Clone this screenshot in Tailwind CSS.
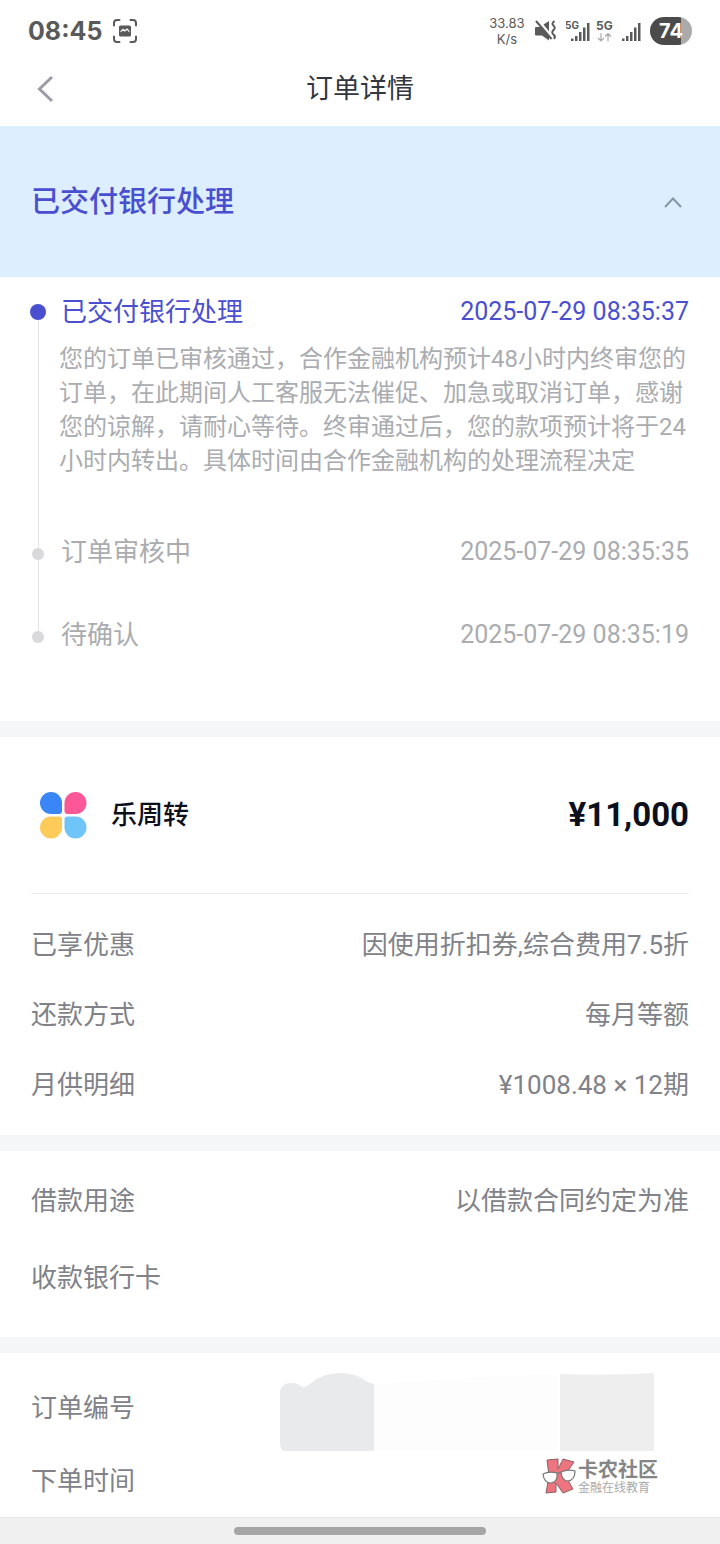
<!DOCTYPE html>
<html lang="zh-CN">
<head>
<meta charset="utf-8">
<meta name="viewport" content="width=device-width, initial-scale=1">
<title>订单详情</title>
<script src="https://cdn.jsdelivr.net/npm/@tailwindcss/browser@4"></script>
</head>
<body class="flex min-h-screen flex-col bg-white font-[Roboto,'Noto_Sans_CJK_SC',sans-serif] text-[#808288]">

<!-- Status bar -->
<div class="flex h-[62px] items-center justify-between px-7 text-[#5a5a5a]">
  <div class="flex items-center gap-2.5">
    <span class="font-[Inter,sans-serif] text-[25px] font-bold leading-8">08:45</span>
    <svg class="size-6.5" viewBox="0 0 26 26" fill="none" stroke="currentColor" stroke-width="2" stroke-linecap="round" aria-hidden="true">
      <path d="M2 7.500V5a3 3 0 0 1 3-3h2.500M18.500 2H21a3 3 0 0 1 3 3v2.500M24 18.500V21a3 3 0 0 1-3 3h-2.500M7.500 24H5a3 3 0 0 1-3-3v-2.500"/>
      <rect x="7" y="7.500" width="12" height="11" rx="1.500" fill="currentColor" stroke="none"/>
      <path d="M8.500 14.500v-1.500l2.500-2.500 1.600 1.600 2.600-1.800 2.300 2.600v1.500l-2.500-2.400-2.400 1.800-1.600-1.300z" fill="#fff" stroke="none"/>
    </svg>
  </div>
  <div class="flex items-center">
    <div class="w-9.5 text-center font-[Inter,sans-serif] text-[13px] leading-4">33.83<br>K/s</div>
    <svg class="ml-2 h-6 w-6" viewBox="0 0 24 24" fill="currentColor" aria-hidden="true">
      <path d="M2 8h6l7 8v5.500L8 16.500H2a1 1 0 0 1-1-1v-6.500A1 1 0 0 1 2 8zM9.500 5.500L15 2v10.500z"/>
      <path d="M3.500 1L19 18.500" stroke="#fff" stroke-width="1.500"/>
      <path d="M2 2L17.500 20" stroke="currentColor" stroke-width="2"/>
      <path d="M20.500 2q-3.500 2.500-1 4.500t0 4.500 0 4.500 .5 4.500" fill="none" stroke="currentColor" stroke-width="2"/>
    </svg>
    <svg class="ml-2 h-6 w-6" viewBox="0 0 24 24" fill="currentColor" aria-hidden="true">
      <rect x="5" y="19.500" width="2.500" height="2.500"/><rect x="9" y="17" width="2.500" height="5"/><rect x="13" y="13" width="2.500" height="9"/><rect x="17" y="8.500" width="2.500" height="13.500"/><rect x="21" y="4" width="2.500" height="18"/>
      <text x="-1" y="10" font-family="Inter" font-size="10" font-weight="700">5G</text>
    </svg>
    <svg class="ml-1.5 h-6 w-5" viewBox="0 0 20 24" aria-hidden="true">
      <text x="0" y="11" font-family="Inter" font-size="12" font-weight="700" fill="currentColor">5G</text>
      <path d="M5 14v8M2 19l3 3 3-3M12 22.500v-8M9 17.500l3-3 3 3" fill="none" stroke="#aaa" stroke-width="1.200"/>
    </svg>
    <svg class="ml-1.5 h-6 w-5" viewBox="0 0 20 24" fill="currentColor" aria-hidden="true">
      <rect x="0" y="19.500" width="2.500" height="2.500"/><rect x="4" y="17" width="2.500" height="5"/><rect x="8" y="13" width="2.500" height="9"/><rect x="12" y="8.500" width="2.500" height="13.500"/><rect x="16" y="4" width="2.500" height="18"/>
    </svg>
    <div class="ml-2 flex h-7 w-10.5 items-center justify-center rounded-full bg-linear-to-r from-[#4b4b4b] from-75% to-[#aaa] to-75% font-[Inter,sans-serif] text-[20px] font-bold text-white">74</div>
  </div>
</div>

<!-- Navigation -->
<header class="grid h-16 grid-cols-[60px_1fr_60px] items-center px-7.5 pb-2.5">
  <button type="button" aria-label="返回" class="flex h-10 items-center pl-1.5">
    <svg class="h-7 w-5" viewBox="0 0 20 28" fill="none" stroke="#9c9ca6" stroke-width="3" aria-hidden="true"><path d="M16 2L3.500 14 16 26"/></svg>
  </button>
  <h1 class="text-center text-[27px] leading-9 text-[#33353f]">订单详情</h1>
</header>

<main class="flex-1">
  <button type="button" aria-expanded="true" class="flex h-[151px] w-full items-center justify-between bg-[#dceeff] px-[31px] pt-0.5 text-[29px] font-medium text-[#4a4fd0]">
    <span>已交付银行处理</span>
    <svg class="h-4.5 w-8" viewBox="0 0 32 18" fill="none" stroke="#8796a4" stroke-width="2" aria-hidden="true"><path d="M8 13l8-8.500 8 8.500"/></svg>
  </button>

  <!-- Progress -->
  <ol class="flex flex-col px-[31px] pb-[68px] pt-[17px] text-[#aaacb0]">
    <li class="grid grid-cols-[14px_1fr] gap-x-3.5">
      <div class="flex flex-col items-center pt-2.5"><i class="size-4 shrink-0 rounded-full bg-[#4a4fd0]"></i><i class="w-px flex-1 bg-[#e4e4e6]"></i></div>
      <div class="pb-[56px]">
        <div class="flex h-9 items-center justify-between pl-0.5 text-[#4a4fd0]"><span class="text-[26px]">已交付银行处理</span><time class="text-[25px]">2025-07-29 08:35:37</time></div>
        <p class="mt-3 text-[24px] leading-[34px]">您的订单已审核通过，合作金融机构预计48小时内终审您的订单，在此期间人工客服无法催促、加急或取消订单，感谢您的谅解，请耐心等待。终审通过后，您的款项预计将于24小时内转出。具体时间由合作金融机构的处理流程决定</p>
      </div>
    </li>
    <li class="grid grid-cols-[14px_1fr] gap-x-3.5">
      <div class="flex flex-col items-center"><i class="h-3.5 w-px bg-[#e4e4e6]"></i><i class="size-3 shrink-0 rounded-full bg-[#d9d9db]"></i><i class="w-px flex-1 bg-[#e4e4e6]"></i></div>
      <div class="h-[83px]">
        <div class="flex h-9 items-center justify-between pl-0.5"><span class="text-[26px]">订单审核中</span><time class="text-[25px]">2025-07-29 08:35:35</time></div>
      </div>
    </li>
    <li class="grid grid-cols-[14px_1fr] gap-x-3.5">
      <div class="flex flex-col items-center"><i class="h-3.5 w-px bg-[#e4e4e6]"></i><i class="size-3 shrink-0 rounded-full bg-[#d9d9db]"></i></div>
      <div class="flex h-9 items-center justify-between pl-0.5"><span class="text-[26px]">待确认</span><time class="text-[25px]">2025-07-29 08:35:19</time></div>
    </li>
  </ol>

  <!-- Loan summary -->
  <section class="border-t-16 border-[#f4f6f7] px-[31px]">
    <div class="flex h-[157px] items-center justify-between border-b border-[#ececee] pl-2 text-[#0c0f1c]">
      <div class="flex items-center gap-6">
        <svg class="size-12" viewBox="0 0 48 48" aria-hidden="true">
          <path fill="#3b86f7" d="M12 1a11 11 0 0 1 11 11v8a3 3 0 0 1-3 3h-8a11 11 0 0 1 0-22z"/>
          <path fill="#fc5796" d="M36.500 1a11 11 0 0 1 0 22h-8a3 3 0 0 1-3-3v-8a11 11 0 0 1 11-11z"/>
          <path fill="#fdcb58" d="M12 25.500h8a3 3 0 0 1 3 3v8a11 11 0 1 1-11-11z"/>
          <path fill="#6fc5f8" d="M28.500 25.500h8a11 11 0 1 1-11 11v-8a3 3 0 0 1 3-3z"/>
        </svg>
        <h2 class="text-[26px] font-medium">乐周转</h2>
      </div>
      <strong class="text-[33px] font-bold">¥11,000</strong>
    </div>
    <dl class="pb-[15px] pt-4 text-[26px] leading-[70px]">
      <div class="flex justify-between"><dt>已享优惠</dt><dd>因使用折扣券,综合费用7.5折</dd></div>
      <div class="flex justify-between"><dt>还款方式</dt><dd>每月等额</dd></div>
      <div class="flex justify-between"><dt>月供明细</dt><dd>¥1008.48 × 12期</dd></div>
    </dl>
  </section>

  <section class="border-t-16 border-[#f4f6f7] px-[31px]">
    <dl class="pb-5 pt-3 text-[26px] leading-[77px]">
      <div class="flex justify-between"><dt>借款用途</dt><dd>以借款合同约定为准</dd></div>
      <div class="flex justify-between"><dt>收款银行卡</dt><dd></dd></div>
    </dl>
  </section>

  <section class="relative border-t-16 border-[#f4f6f7] px-[31px]">
    <dl class="pt-[18px] text-[26px]">
      <div class="flex justify-between leading-[75px]"><dt>订单编号</dt><dd></dd></div>
      <div class="flex justify-between leading-[71px]"><dt>下单时间</dt><dd></dd></div>
    </dl>
    <!-- Masked order number -->
    <svg class="absolute right-16 top-5 h-20 w-[378px]" viewBox="0 0 378 80" aria-hidden="true">
      <path fill="#fdfdfd" d="M96 12q100-10 184-10v76H96z"/>
      <path fill="#e9eaec" d="M2 18Q4 10 13 10q6 0 11 4 4 1 9-4Q46 0 62 0q16 0 26 8 4 3 8 3v65q0 2-3 2H6q-4-2-4-8z"/>
      <path fill="#eee" d="M282 1q46 2 94-1v78H282z"/>
    </svg>
    <!-- Community watermark -->
    <div class="absolute right-15.5 top-[103px] flex items-center gap-0.5 text-[#858585]">
      <svg class="h-9 w-8.5" viewBox="0 0 34 36" aria-hidden="true">
        <path d="M5 2l11-1v10l5-10 11 3-9 13 8 14-10 4-7-10v9l-10 1 3-17z" fill="#ec7580" stroke="#8a6065"/>
        <g fill="#fff" stroke="#777" stroke-width="1.200"><path d="M1 16q6-3 14-1 1 9-6 10-7 0-8-9z"/><path d="M19 14q7-3 14-1 0 9-7 10-6 0-7-9z"/><path d="M15 16q2-2 4-1" fill="none"/></g>
      </svg>
      <div class="flex flex-col pt-1">
        <span class="text-[20px] font-bold leading-5">卡农社区</span>
        <span class="text-[12px] leading-4 text-[#aaa]">金融在线教育</span>
      </div>
    </div>
  </section>
</main>

<!-- Gesture bar -->
<footer class="flex h-[27px] items-center justify-center border-t border-[#e5e5e6] bg-[#f0f0f1]">
  <div class="h-2 w-[35%] rounded-full bg-[#a6a6a6]"></div>
</footer>
</body>
</html>
